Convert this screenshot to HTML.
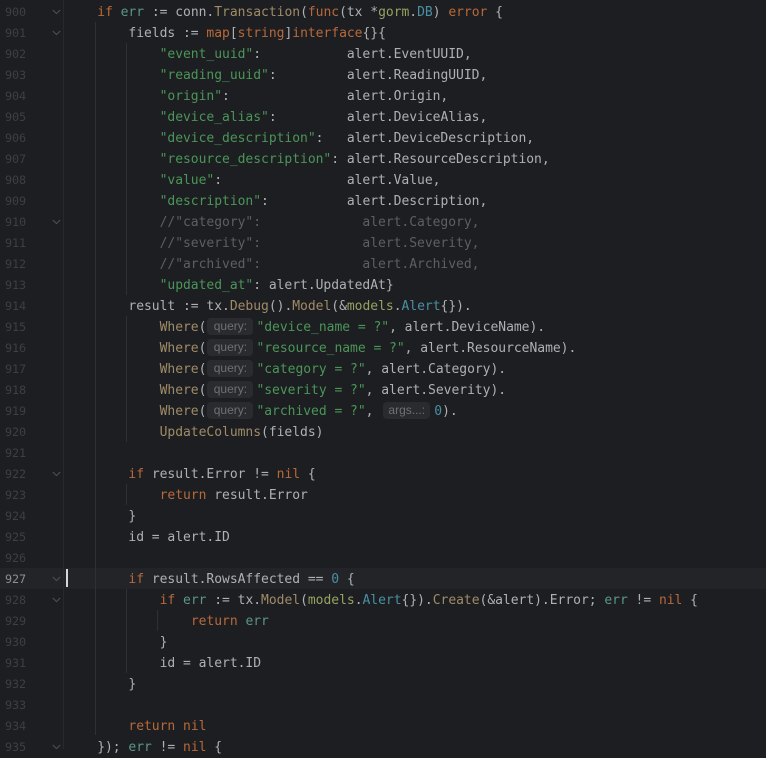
<!DOCTYPE html>
<html><head><meta charset="utf-8"><style>
html,body{margin:0;padding:0;background:#1c1e21;}
body{width:766px;height:749px;overflow:hidden;position:relative;font-family:"DejaVu Sans Mono","Liberation Mono",monospace;font-size:13px;color:#aeb1b4;}
.l{position:absolute;left:66px;margin-top:1px;height:21px;line-height:21px;white-space:pre;letter-spacing:-.026px;}
.n{position:absolute;left:5px;margin-top:1px;height:21px;line-height:21px;font-size:11.8px;color:#3d3f43;letter-spacing:-.1px;}
.g{position:absolute;width:1px;background:#2e3034;}
.k{color:#b8693a}.s{color:#4c9559}.f{color:#a08b68}.v{color:#5c9684}.t{color:#98a162}.b{color:#4a8fa3}.c{color:#5c5f63}
.h{display:inline-block;height:17px;line-height:16px;font-family:"Liberation Sans",sans-serif;font-size:12px;color:#6d7074;background:#292b2f;border-radius:4px;text-align:center;vertical-align:1px;letter-spacing:0;}
.q{width:46px;margin:0 3px 0 1px}.a{width:47px;margin:0 4px 0 2px}
svg{position:absolute;left:51px;margin-top:1px}
</style></head><body>
<div style="position:absolute;left:0;top:568px;width:766px;height:21px;background:#222428"></div>
<div style="position:absolute;left:63px;top:0;width:1px;height:749px;background:#27292c"></div>
<div class="g" style="left:95px;top:22px;height:713px"></div>
<div class="g" style="left:126px;top:43px;height:252px"></div>
<div class="g" style="left:126px;top:316px;height:126px"></div>
<div class="g" style="left:126px;top:484px;height:21px"></div>
<div class="g" style="left:126px;top:589px;height:84px"></div>
<div class="g" style="left:157px;top:610px;height:21px"></div>
<div style="position:absolute;left:66px;top:569px;width:2px;height:18px;background:#d4d6d8"></div>
<svg style="top:8px" width="11" height="6"><path d="M1.8 1 5.5 4.6 9.2 1" fill="none" stroke="#505256"/></svg>
<svg style="top:29px" width="11" height="6"><path d="M1.8 1 5.5 4.6 9.2 1" fill="none" stroke="#505256"/></svg>
<svg style="top:218px" width="11" height="6"><path d="M1.8 1 5.5 4.6 9.2 1" fill="none" stroke="#505256"/></svg>
<svg style="top:470px" width="11" height="6"><path d="M1.8 1 5.5 4.6 9.2 1" fill="none" stroke="#505256"/></svg>
<svg style="top:575px" width="11" height="6"><path d="M1.8 1 5.5 4.6 9.2 1" fill="none" stroke="#505256"/></svg>
<svg style="top:596px" width="11" height="6"><path d="M1.8 1 5.5 4.6 9.2 1" fill="none" stroke="#505256"/></svg>
<svg style="top:743px" width="11" height="6"><path d="M1.8 1 5.5 4.6 9.2 1" fill="none" stroke="#505256"/></svg>

<div class="n" style="top:1px">900</div>
<div class="n" style="top:22px">901</div>
<div class="n" style="top:43px">902</div>
<div class="n" style="top:64px">903</div>
<div class="n" style="top:85px">904</div>
<div class="n" style="top:106px">905</div>
<div class="n" style="top:127px">906</div>
<div class="n" style="top:148px">907</div>
<div class="n" style="top:169px">908</div>
<div class="n" style="top:190px">909</div>
<div class="n" style="top:211px">910</div>
<div class="n" style="top:232px">911</div>
<div class="n" style="top:253px">912</div>
<div class="n" style="top:274px">913</div>
<div class="n" style="top:295px">914</div>
<div class="n" style="top:316px">915</div>
<div class="n" style="top:337px">916</div>
<div class="n" style="top:358px">917</div>
<div class="n" style="top:379px">918</div>
<div class="n" style="top:400px">919</div>
<div class="n" style="top:421px">920</div>
<div class="n" style="top:442px">921</div>
<div class="n" style="top:463px">922</div>
<div class="n" style="top:484px">923</div>
<div class="n" style="top:505px">924</div>
<div class="n" style="top:526px">925</div>
<div class="n" style="top:547px">926</div>
<div class="n" style="top:568px;color:#8c8f93">927</div>
<div class="n" style="top:589px">928</div>
<div class="n" style="top:610px">929</div>
<div class="n" style="top:631px">930</div>
<div class="n" style="top:652px">931</div>
<div class="n" style="top:673px">932</div>
<div class="n" style="top:694px">933</div>
<div class="n" style="top:715px">934</div>
<div class="n" style="top:736px">935</div>

<div class="l" style="top:1px">    <span class="k">if</span> <span class="v">err</span> := conn.<span class="f">Transaction</span>(<span class="k">func</span>(tx *<span class="t">gorm</span>.<span class="b">DB</span>) <span class="k">error</span> {</div>
<div class="l" style="top:22px">        fields := <span class="k">map</span>[<span class="k">string</span>]<span class="k">interface</span>{}{</div>
<div class="l" style="top:43px">            <span class="s">"event_uuid"</span>:           alert.EventUUID,</div>
<div class="l" style="top:64px">            <span class="s">"reading_uuid"</span>:         alert.ReadingUUID,</div>
<div class="l" style="top:85px">            <span class="s">"origin"</span>:               alert.Origin,</div>
<div class="l" style="top:106px">            <span class="s">"device_alias"</span>:         alert.DeviceAlias,</div>
<div class="l" style="top:127px">            <span class="s">"device_description"</span>:   alert.DeviceDescription,</div>
<div class="l" style="top:148px">            <span class="s">"resource_description"</span>: alert.ResourceDescription,</div>
<div class="l" style="top:169px">            <span class="s">"value"</span>:                alert.Value,</div>
<div class="l" style="top:190px">            <span class="s">"description"</span>:          alert.Description,</div>
<div class="l c" style="top:211px">            //"category":             alert.Category,</div>
<div class="l c" style="top:232px">            //"severity":             alert.Severity,</div>
<div class="l c" style="top:253px">            //"archived":             alert.Archived,</div>
<div class="l" style="top:274px">            <span class="s">"updated_at"</span>: alert.UpdatedAt}</div>
<div class="l" style="top:295px">        result := tx.<span class="f">Debug</span>().<span class="f">Model</span>(&amp;<span class="t">models</span>.<span class="b">Alert</span>{}).</div>
<div class="l" style="top:316px">            <span class="f">Where</span>(<span class="h q">query:</span><span class="s">"device_name = ?"</span>, alert.DeviceName).</div>
<div class="l" style="top:337px">            <span class="f">Where</span>(<span class="h q">query:</span><span class="s">"resource_name = ?"</span>, alert.ResourceName).</div>
<div class="l" style="top:358px">            <span class="f">Where</span>(<span class="h q">query:</span><span class="s">"category = ?"</span>, alert.Category).</div>
<div class="l" style="top:379px">            <span class="f">Where</span>(<span class="h q">query:</span><span class="s">"severity = ?"</span>, alert.Severity).</div>
<div class="l" style="top:400px">            <span class="f">Where</span>(<span class="h q">query:</span><span class="s">"archived = ?"</span>, <span class="h a">args...:</span><span class="b">0</span>).</div>
<div class="l" style="top:421px">            <span class="f">UpdateColumns</span>(fields)</div>
<div class="l" style="top:463px">        <span class="k">if</span> result.Error != <span class="k">nil</span> {</div>
<div class="l" style="top:484px">            <span class="k">return</span> result.Error</div>
<div class="l" style="top:505px">        }</div>
<div class="l" style="top:526px">        id = alert.ID</div>
<div class="l" style="top:568px">        <span class="k">if</span> result.RowsAffected == <span class="b">0</span> {</div>
<div class="l" style="top:589px">            <span class="k">if</span> <span class="v">err</span> := tx.<span class="f">Model</span>(<span class="t">models</span>.<span class="b">Alert</span>{}).<span class="f">Create</span>(&amp;alert).Error; <span class="v">err</span> != <span class="k">nil</span> {</div>
<div class="l" style="top:610px">                <span class="k">return</span> <span class="v">err</span></div>
<div class="l" style="top:631px">            }</div>
<div class="l" style="top:652px">            id = alert.ID</div>
<div class="l" style="top:673px">        }</div>
<div class="l" style="top:715px">        <span class="k">return</span> <span class="k">nil</span></div>
<div class="l" style="top:736px">    }); <span class="v">err</span> != <span class="k">nil</span> {</div>
</body></html>
